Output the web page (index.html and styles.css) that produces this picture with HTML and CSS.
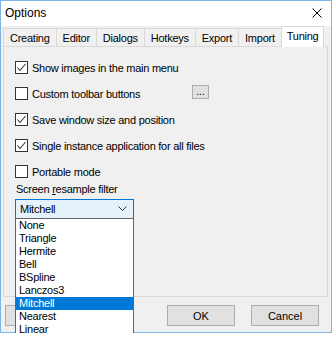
FILE: index.html
```html
<!DOCTYPE html>
<html lang="en">
<head>
    <meta charset="UTF-8">
    <title>Options</title>
    <link rel="stylesheet" href="styles.css">
</head>
<body>
    <div class="window">
        <div class="titlebar">
            <span class="title">Options</span>
            <svg class="close" width="10" height="10" viewBox="0 0 10 10">
                <path d="M0.5 0.5 L9.5 9.5 M9.5 0.5 L0.5 9.5" stroke="#000" stroke-width="1" fill="none"/>
            </svg>
        </div>
        <div class="client">
            <div class="tabs">
                <div class="tab">Creating</div>
                <div class="tab">Editor</div>
                <div class="tab">Dialogs</div>
                <div class="tab">Hotkeys</div>
                <div class="tab">Export</div>
                <div class="tab">Import</div>
                <div class="tab active">Tuning</div>
            </div>
            <div class="page">
                <div class="check-row">
                    <span class="box checked"><svg width="11" height="11" viewBox="0 0 11 11"><path d="M1.5 5.5 L4 8.5 L9.5 2" stroke="#333" stroke-width="1.1" fill="none"/></svg></span>
                    <span class="check-label">Show images in the main menu</span>
                </div>
                <div class="check-row">
                    <span class="box"></span>
                    <span class="check-label fixed">Custom toolbar buttons</span>
                    <button class="dots">...</button>
                </div>
                <div class="check-row">
                    <span class="box checked"><svg width="11" height="11" viewBox="0 0 11 11"><path d="M1.5 5.5 L4 8.5 L9.5 2" stroke="#333" stroke-width="1.1" fill="none"/></svg></span>
                    <span class="check-label">Save window size and position</span>
                </div>
                <div class="check-row">
                    <span class="box checked"><svg width="11" height="11" viewBox="0 0 11 11"><path d="M1.5 5.5 L4 8.5 L9.5 2" stroke="#333" stroke-width="1.1" fill="none"/></svg></span>
                    <span class="check-label">Single instance application for all files</span>
                </div>
                <div class="check-row last">
                    <span class="box"></span>
                    <span class="check-label">Portable mode</span>
                </div>
                <div class="field-label">Screen <u>r</u>esample filter</div>
                <div class="combo-wrap">
                    <div class="combo">
                        <span>Mitchell</span>
                        <svg width="9" height="6" viewBox="0 0 9 6"><path d="M0.5 0.5 L4.5 4.5 L8.5 0.5" stroke="#333" stroke-width="1" fill="none"/></svg>
                    </div>
                    <div class="dropdown">
                        <div class="item">None</div>
                        <div class="item">Triangle</div>
                        <div class="item">Hermite</div>
                        <div class="item">Bell</div>
                        <div class="item">BSpline</div>
                        <div class="item">Lanczos3</div>
                        <div class="item selected">Mitchell</div>
                        <div class="item">Nearest</div>
                        <div class="item">Linear</div>
                    </div>
                </div>
            </div>
            <div class="buttons">
                <button class="btn wide"></button>
                <button class="btn">OK</button>
                <button class="btn">Cancel</button>
            </div>
        </div>
    </div>
</body>
</html>
```

FILE: styles.css
```css
body {
    margin: 0;
    background: #fff;
    font-family: "Liberation Sans", Arial, sans-serif;
    font-size: 11px;
    letter-spacing: -0.25px;
    color: #000;
}

.window {
    width: 330px;
    height: 331px;
    border: 1px solid #80b3e6;
    display: flex;
    flex-direction: column;
}

.titlebar {
    height: 25px;
    background: #fff;
    display: flex;
    align-items: center;
    padding: 0 9px 0 4px;
    justify-content: space-between;
}

.title {
    font-size: 12px;
    letter-spacing: 0;
    margin-top: -1px;
}

.close {
    margin-top: -1px;
}

.client {
    flex: 1;
    background: #f0f0f0;
    padding: 0 3px 0 2px;
}

.tabs {
    display: flex;
    align-items: flex-end;
    height: 20px;
    position: relative;
    z-index: 1;
}

.tab {
    height: 18px;
    line-height: 18px;
    padding: 0 6px;
    border: 1px solid #d9d9d9;
    border-bottom: none;
    margin-right: -1px;
    background: #f0f0f0;
    box-sizing: border-box;
}

.tab.active {
    height: 21px;
    line-height: 18px;
    background: #fff;
    margin-right: 0;
    margin-bottom: -1px;
    padding: 0 5px;
}

.page {
    height: 251px;
    box-sizing: border-box;
    border: 1px solid #d9d9d9;
    padding: 14px 0 0 11px;
}

.check-row {
    display: flex;
    align-items: center;
    height: 13px;
    margin-bottom: 13px;
}

.check-row.last {
    margin-bottom: 0;
}

.box {
    width: 13px;
    height: 13px;
    box-sizing: border-box;
    border: 1px solid #333;
    background: #fff;
    display: flex;
    align-items: center;
    justify-content: center;
    margin-right: 4px;
}

.check-label.fixed {
    width: 160px;
}

.dots {
    width: 17px;
    height: 14px;
    margin-top: -3px;
    padding: 0;
    border: 1px solid #adadad;
    background: #e1e1e1;
    font-family: inherit;
    font-size: 10px;
    line-height: 8px;
    color: #000;
}

.field-label {
    margin-top: 5px;
    height: 13px;
    line-height: 13px;
    padding-left: 1px;
}

.combo-wrap {
    position: relative;
    margin-top: 3px;
    width: 119px;
}

.combo {
    height: 20px;
    box-sizing: border-box;
    border: 1px solid #0078d7;
    background: #e5f1fb;
    display: flex;
    align-items: center;
    justify-content: space-between;
    padding: 0 6px 0 4px;
}

.dropdown {
    position: absolute;
    top: 19px;
    left: 0;
    width: 119px;
    box-sizing: border-box;
    border: 1px solid #646464;
    background: #fff;
    z-index: 5;
}

.item {
    height: 13px;
    line-height: 13px;
    padding-left: 3px;
}

.item.selected {
    background: #0078d7;
    color: #fff;
}

.buttons {
    display: flex;
    gap: 16px;
    padding-top: 8px;
    padding-left: 2px;
}

.btn {
    width: 68px;
    height: 21px;
    border: 1px solid #adadad;
    background: #e1e1e1;
    font-family: inherit;
    font-size: 11px;
    color: #000;
    padding: 0;
}

.btn.wide {
    width: 80px;
    margin-right: 66px;
}
```
